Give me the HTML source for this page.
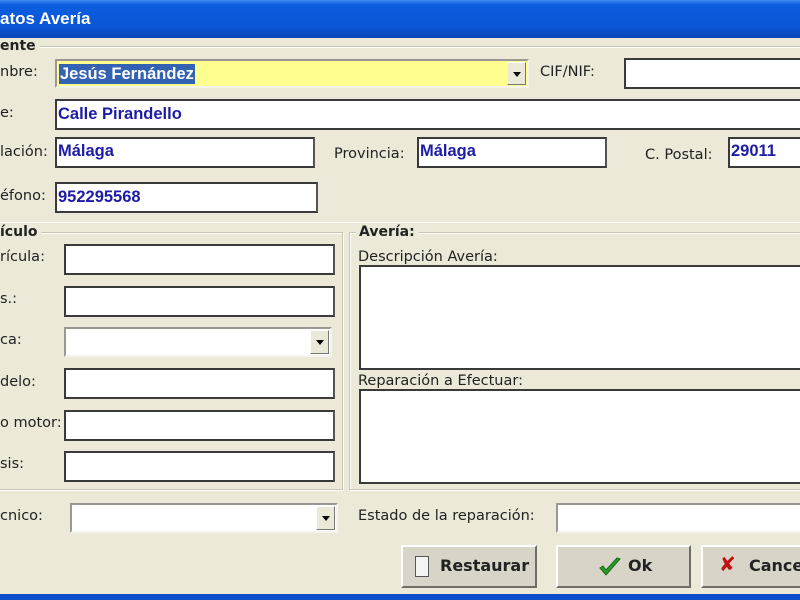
<!DOCTYPE html>
<html><head><meta charset="utf-8"><style>
*{margin:0;padding:0;box-sizing:border-box}
body{width:800px;height:600px;overflow:hidden;background:#ece9d8;position:relative;font-family:"DejaVu Sans","Liberation Sans",sans-serif;font-size:14.5px;color:#222}
.a{position:absolute}
.t{position:absolute;white-space:nowrap;line-height:16px}
.in{position:absolute;background:#fff;border:2px solid #3a3a3a;border-right-color:#555;}
.v{position:absolute;left:1px;top:4px;font-weight:bold;font-size:16.5px;font-family:"Liberation Sans",sans-serif;color:#1c1ca6;white-space:nowrap}
.cb{position:absolute;background:#fff;border:2px solid #9a9890;border-right-color:#f4f3ee;border-bottom-color:#f4f3ee}
.arr{position:absolute;right:1px;top:1px;bottom:1px;width:19px;background:#ece9d8;border:1px solid #fff;border-right-color:#777;border-bottom-color:#777}
.arr:after{content:"";position:absolute;left:5px;top:9px;border:4px solid transparent;border-top:5px solid #000;border-bottom:0}
.grp{position:absolute;border:1px solid #c8c5b5;box-shadow:inset 1px 1px 0 #fff,1px 1px 0 #fff}
.gl{position:absolute;font-weight:bold;font-size:14px;background:#ece9d8;padding-right:4px;line-height:16px}
.btn{position:absolute;background:#d8d5c8;border:2px solid #fff;border-right-color:#6f6d66;border-bottom-color:#6f6d66;font-weight:bold;font-size:16px;font-family:"DejaVu Sans",sans-serif}
</style></head><body>
<div class="a" style="left:0;top:0;width:800px;height:38px;background:linear-gradient(#3c8cf0 0,#0c5ee0 12%,#0a56d6 70%,#0846b8 100%)"></div>
<div class="t" style="left:0;top:11px;color:#fff;font-weight:bold;font-size:17px;font-family:'Liberation Sans',sans-serif">atos Avería</div>
<div class="a" style="left:0;top:594px;width:800px;height:6px;background:#0a4fc8"></div>

<div class="grp" style="left:-5px;top:46px;width:820px;height:176px;border-bottom:none"></div>
<div class="gl" style="left:0;top:38px">ente</div>

<div class="t" style="left:0;top:64px">nbre:</div>
<div class="cb" style="left:55px;top:59px;width:474px;height:29px;background:#ffff90"><div class="a" style="left:2px;top:3px;background:#3462b3;color:#fff;font-weight:bold;font-size:16.5px;font-family:'Liberation Sans',sans-serif;padding:1px 1px;line-height:18px">Jesús Fernández</div><div class="arr"></div></div>
<div class="t" style="left:540px;top:64px">CIF/NIF:</div>
<div class="in" style="left:624px;top:58px;width:190px;height:31px"></div>

<div class="t" style="left:0;top:105px">e:</div>
<div class="in" style="left:55px;top:99px;width:760px;height:31px"><div class="v">Calle Pirandello</div></div>

<div class="t" style="left:0;top:144px">lación:</div>
<div class="in" style="left:55px;top:137px;width:260px;height:31px"><div class="v" style="top:3px">Málaga</div></div>
<div class="t" style="left:334px;top:146px">Provincia:</div>
<div class="in" style="left:417px;top:137px;width:190px;height:31px"><div class="v" style="top:3px">Málaga</div></div>
<div class="t" style="left:645px;top:147px">C. Postal:</div>
<div class="in" style="left:728px;top:137px;width:90px;height:31px"><div class="v" style="top:3px">29011</div></div>

<div class="t" style="left:0;top:188px">éfono:</div>
<div class="in" style="left:55px;top:182px;width:263px;height:31px"><div class="v">952295568</div></div>

<div class="grp" style="left:-5px;top:232px;width:348px;height:258px"></div>
<div class="gl" style="left:0;top:224px">ículo</div>
<div class="grp" style="left:349px;top:232px;width:470px;height:258px"></div>
<div class="gl" style="left:356px;top:224px;padding-left:3px">Avería:</div>

<div class="t" style="left:0;top:249px">rícula:</div>
<div class="in" style="left:64px;top:244px;width:271px;height:31px"></div>
<div class="t" style="left:0;top:291px">s.:</div>
<div class="in" style="left:64px;top:286px;width:271px;height:31px"></div>
<div class="t" style="left:0;top:332px">ca:</div>
<div class="cb" style="left:64px;top:327px;width:268px;height:30px"><div class="arr"></div></div>
<div class="t" style="left:0;top:374px">delo:</div>
<div class="in" style="left:64px;top:368px;width:271px;height:31px"></div>
<div class="t" style="left:0;top:415px">o motor:</div>
<div class="in" style="left:64px;top:410px;width:271px;height:31px"></div>
<div class="t" style="left:0;top:456px">sis:</div>
<div class="in" style="left:64px;top:451px;width:271px;height:31px"></div>

<div class="t" style="left:358px;top:249px">Descripción Avería:</div>
<div class="in" style="left:359px;top:265px;width:460px;height:105px"></div>
<div class="t" style="left:358px;top:373px">Reparación a Efectuar:</div>
<div class="in" style="left:359px;top:389px;width:460px;height:95px"></div>

<div class="t" style="left:0;top:508px">cnico:</div>
<div class="cb" style="left:70px;top:503px;width:268px;height:30px"><div class="arr"></div></div>
<div class="t" style="left:358px;top:508px">Estado de la reparación:</div>
<div class="cb" style="left:556px;top:503px;width:260px;height:30px"></div>

<div class="btn" style="left:401px;top:545px;width:136px;height:43px"><div class="a" style="left:12px;top:9px;width:14px;height:21px;border:1px solid #555;background:#f4f4f4"></div><div class="t" style="left:37px;top:11px">Restaurar</div></div>
<div class="btn" style="left:556px;top:545px;width:135px;height:43px"><svg class="a" style="left:40px;top:9px" width="24" height="22" viewBox="0 0 24 22"><path d="M2 12 L8 19 L22 3 L19 2 L8 14 L5 10 Z" fill="#2a9a2a" stroke="#1a6a1a" stroke-width="1"/></svg><div class="t" style="left:70px;top:11px">Ok</div></div>
<div class="btn" style="left:701px;top:545px;width:120px;height:43px"><div class="t" style="left:16px;top:9px;color:#c01010;font-size:20px">✘</div><div class="t" style="left:46px;top:11px">Cancelar</div></div>
</body></html>
